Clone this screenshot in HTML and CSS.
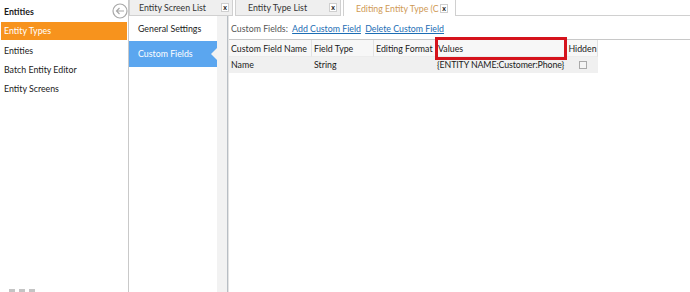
FILE: index.html
```html
<!DOCTYPE html>
<html lang="en">
  <head>
    <meta charset="UTF-8" />
    <title>Entity Types</title>
    <link rel="stylesheet" href="styles.css">
  </head>
  <body>
    <div class="sidebar">
      <div class="sidebar-header">
        <span>Entities</span>
        <svg class="back-icon" width="16" height="16" viewBox="0 0 16 16">
          <circle cx="8" cy="8" r="7" fill="none" stroke="#a8a8a8" stroke-width="1.2" />
          <path d="M12 8H4.5M7.5 5L4.5 8L7.5 11" fill="none" stroke="#a8a8a8" stroke-width="1.2" />
        </svg>
      </div>
      <ul class="menu">
        <li class="active">Entity Types</li>
        <li>Entities</li>
        <li>Batch Entity Editor</li>
        <li>Entity Screens</li>
      </ul>
      <div class="sidebar-foot"><span></span><span></span><span></span></div>
    </div>

    <div class="workspace">
      <div class="tabs">
        <div class="tab"><span class="tab-title">Entity Screen List</span><span class="close">x</span></div>
        <div class="tab"><span class="tab-title">Entity Type List</span><span class="close">x</span></div>
        <div class="tab tab-active"><span class="tab-title">Editing Entity Type (C</span><span class="close">x</span></div>
        <div class="tab-fill"></div>
      </div>

      <div class="content">
        <div class="pages">
          <div class="page">General Settings</div>
          <div class="page page-active">Custom Fields</div>
        </div>
        <div class="splitter"></div>

        <div class="editor">
          <div class="toolbar">
            Custom Fields:
            <a href="#">Add Custom Field</a>
            <a href="#">Delete Custom Field</a>
          </div>

          <div class="grid">
            <div class="grid-row grid-head">
              <div class="cell c-name">Custom Field Name</div>
              <div class="cell c-type">Field Type</div>
              <div class="cell c-format">Editing Format</div>
              <div class="cell c-values">Values<span class="mark"></span></div>
              <div class="cell c-hidden">Hidden</div>
            </div>
            <div class="grid-row grid-item">
              <div class="cell c-name">Name</div>
              <div class="cell c-type">String</div>
              <div class="cell c-format"></div>
              <div class="cell c-values">{ENTITY NAME:Customer:Phone}</div>
              <div class="cell c-hidden"><span class="check"></span></div>
            </div>
          </div>
        </div>
      </div>
    </div>
  </body>
</html>
```

FILE: styles.css
```css
* {
  box-sizing: border-box;
}

body {
  margin: 0;
  display: flex;
  height: 292px;
  overflow: hidden;
  background-color: #fff;
  font-family: Lato, 'Open Sans', sans-serif;
  font-size: 8.8px;
  color: #1a1a1a;
}

/* left entity menu */
.sidebar {
  width: 129px;
  flex-shrink: 0;
  display: flex;
  flex-direction: column;
  border-right: 1px solid #c9c9c9;
  padding-left: 1px;
}

.sidebar-header {
  display: flex;
  align-items: center;
  justify-content: space-between;
  height: 22px;
  padding: 0 0 0 3px;
  font-weight: bold;
}

.back-icon {
  margin-top: -1px;
}

.menu {
  list-style: none;
  margin: 0;
  padding: 0 1px 0 0;
  flex: 1;
}

.menu li {
  height: 19px;
  line-height: 19px;
  padding-left: 3px;
}

.menu li.active {
  background-color: #f7931d;
  color: #fff;
  height: 18px;
  line-height: 18px;
  margin-bottom: 1px;
}

.sidebar-foot {
  display: flex;
  gap: 4px;
  height: 3px;
  padding-left: 8px;
}

.sidebar-foot span {
  width: 6px;
  background-color: #c4c4c4;
}

/* tabs + content */
.workspace {
  flex: 1;
  display: flex;
  flex-direction: column;
}

.tabs {
  display: flex;
  height: 16px;
  background-color: #fff;
}

.tab {
  display: flex;
  align-items: center;
  gap: 3px;
  background-color: #efefef;
  border: 1px solid #d0d0d0;
  border-top: 0;
  padding: 0 3px 0 9px;
  margin-right: 2px;
  color: #333;
}

.tab-title {
  flex: 1;
  overflow: hidden;
  white-space: nowrap;
}

.tab:nth-child(1) {
  width: 104px;
}

.tab:nth-child(2) {
  width: 106px;
  padding-left: 12px;
}

.tab-active {
  width: 113px;
  background-color: #fff;
  border-bottom: 0;
  color: #cf9a55;
  padding-left: 12px;
  padding-right: 7px;
  gap: 0;
}

.close {
  display: inline-flex;
  align-items: center;
  justify-content: center;
  flex-shrink: 0;
  width: 8px;
  height: 9px;
  border: 1px solid #cfcfcf;
  background-color: #fff;
  color: #111;
  font-size: 7px;
  font-weight: bold;
  line-height: 1;
}

.tab-fill {
  flex: 1;
  border-bottom: 1px solid #d0d0d0;
  margin-left: -2px;
}

.content {
  flex: 1;
  display: flex;
}

.pages {
  width: 88px;
  flex-shrink: 0;
}

.page {
  height: 25px;
  line-height: 25px;
  padding-left: 9px;
}

.page-active {
  position: relative;
  height: 26px;
  line-height: 26px;
  background-color: #5ba6ef;
  color: #fff;
}

/* notch pointing at the open page */
.page-active::after {
  content: '';
  position: absolute;
  right: 0;
  top: 7px;
  border-top: 6px solid transparent;
  border-bottom: 6px solid transparent;
  border-right: 6px solid #f2f2f2;
}

.splitter {
  width: 11px;
  flex-shrink: 0;
  background-color: #f2f2f2;
  border-right: 1px solid #b8bec4;
}

.editor {
  flex: 1;
  display: flex;
  flex-direction: column;
  border-left: 1px solid #e4e4e4;
}

.toolbar {
  height: 23px;
  line-height: 25px;
  padding-left: 2px;
  color: #555;
}

.toolbar a {
  color: #1c6db4;
  margin-left: 2px;
}

.grid {
  border-top: 1px solid #c8c8c8;
}

.grid-row {
  display: flex;
}

.cell {
  position: relative;
  padding-left: 2px;
  white-space: nowrap;
}

.grid-head .cell {
  height: 17px;
  line-height: 18px;
  background-color: #f7f7f7;
  border-right: 1px solid #e2e2e2;
  border-bottom: 1px solid #ececec;
}

.grid-item .cell {
  height: 16px;
  line-height: 16px;
  background-color: #f0f0f0;
}

.grid-item .c-values {
  z-index: 1;
  padding-left: 1px;
  letter-spacing: -0.1px;
}

.c-name { width: 83px; }
.c-type { width: 62px; }
.c-format { width: 62px; }
.c-values { width: 130px; }
.c-hidden { width: 32px; text-align: center; }

.grid-item .c-hidden {
  display: flex;
  align-items: center;
  justify-content: center;
}

.check {
  width: 8px;
  height: 8px;
  border: 1px solid #a9a9a9;
  background-color: #f4f4f4;
}

/* red highlight round the Values header */
.mark {
  position: absolute;
  z-index: 5;
  left: -1px;
  top: -3px;
  width: 132px;
  height: 23px;
  border: 3px solid #d5131c;
}
```
